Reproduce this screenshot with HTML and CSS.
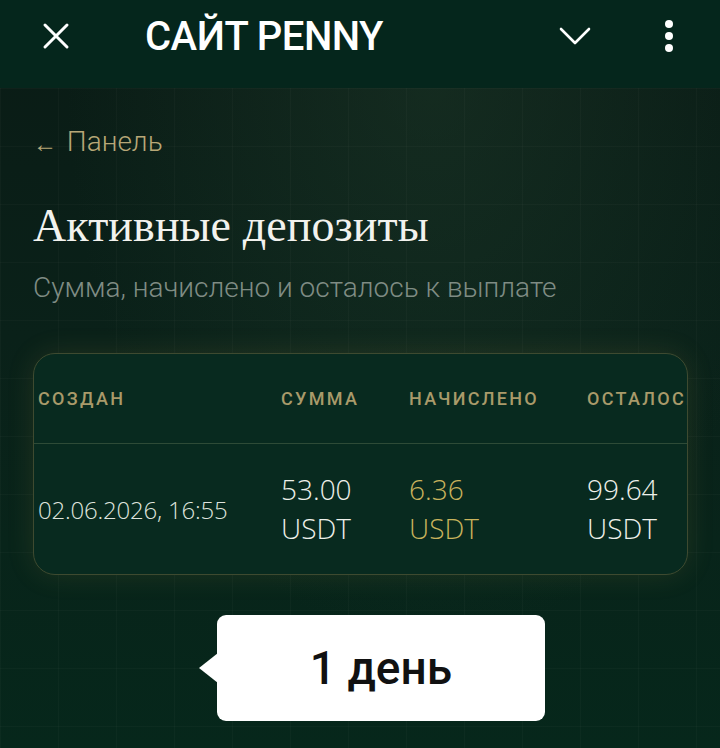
FILE: index.html
```html
<!DOCTYPE html>
<html lang="ru">
<head>
  <meta charset="UTF-8" />
  <title>САЙТ PENNY</title>
  <link rel="stylesheet" href="styles.css">
</head>
<body>
  <header class="topbar">
    <svg class="icon-close" width="28" height="28" viewBox="0 0 28 28">
      <path d="M3 3 L25 25 M25 3 L3 25" stroke="#fff" stroke-width="3" stroke-linecap="round" fill="none"/>
    </svg>
    <div class="topbar-title">САЙТ PENNY</div>
    <svg class="icon-chevron" width="32" height="18" viewBox="0 0 32 18">
      <path d="M2 2 L16 16 L30 2" stroke="#fff" stroke-width="2.6" stroke-linecap="round" stroke-linejoin="round" fill="none"/>
    </svg>
    <svg class="icon-more" width="12" height="32" viewBox="0 0 12 32">
      <circle cx="6" cy="4" r="4" fill="#fff"/>
      <circle cx="6" cy="16" r="4" fill="#fff"/>
      <circle cx="6" cy="28" r="4" fill="#fff"/>
    </svg>
  </header>

  <main class="page">
    <a class="back-link" href="#"><span class="back-arrow">←</span> Панель</a>
    <h1>Активные депозиты</h1>
    <p class="subtitle">Сумма, начислено и осталось к выплате</p>

    <div class="card">
      <table class="deposits">
        <thead>
          <tr>
            <th class="col-date">Создан</th>
            <th class="col-sum">Сумма</th>
            <th class="col-acc">Начислено</th>
            <th class="col-left">Осталось</th>
          </tr>
        </thead>
        <tbody>
          <tr>
            <td class="date">02.06.2026, 16:55</td>
            <td>53.00<br>USDT</td>
            <td class="accrued">6.36<br>USDT</td>
            <td>99.64<br>USDT</td>
          </tr>
        </tbody>
      </table>
    </div>

    <div class="tooltip">1 день</div>
  </main>
</body>
</html>
```

FILE: styles.css
```css
body {
  margin: 0;
  height: 748px;
  overflow: hidden;
  font-family: Roboto, "Noto Sans", sans-serif;
  background-color: #08231a;
  background-image:
    linear-gradient(rgba(255, 255, 255, 0.022) 1px, transparent 1px),
    linear-gradient(90deg, rgba(255, 255, 255, 0.022) 1px, transparent 1px),
    radial-gradient(ellipse at 60% 10%, rgba(40, 70, 50, 0.35), transparent 60%),
    linear-gradient(180deg, #0a1b15 0%, #0a2119 45%, #06271b 100%);
  background-size: 58px 58px, 58px 58px, 100% 100%, 100% 100%;
  background-position: 0 30px, 0 0, 0 0, 0 0;
  color: #fff;
}

.topbar {
  height: 88px;
  background: #05261c;
  display: flex;
  align-items: center;
  padding: 0 42px;
  box-sizing: border-box;
}

.icon-close {
  margin-top: -16px;
}

.topbar-title {
  font-size: 40px;
  font-weight: 500;
  margin-left: 75px;
  margin-top: -16px;
  flex: 1;
  letter-spacing: -0.5px;
}

.icon-chevron {
  margin-top: -16px;
  margin-right: 72px;
}

.icon-more {
  margin-top: -16px;
  margin-right: 3px;
}

.page {
  position: relative;
  padding: 39px 32px 0 33px;
}

.back-link {
  display: block;
  font-size: 28px;
  line-height: 30px;
  font-weight: 300;
  color: #b7a777;
  text-decoration: none;
}

.back-arrow {
  font-size: 24px;
  margin-right: 3px;
  position: relative;
  top: 1px;
}

h1 {
  margin: 42px 0 0;
  font-family: "Liberation Serif", "DejaVu Serif", serif;
  font-weight: 400;
  font-size: 46px;
  line-height: 52px;
  color: #f2f2ee;
  letter-spacing: 0.1px;
}

.subtitle {
  margin: 20px 0 0;
  font-size: 28px;
  line-height: 32px;
  font-weight: 300;
  color: #7f8c84;
}

.card {
  margin-top: 49px;
  width: 655px;
  height: 222px;
  box-sizing: border-box;
  border: 1px solid #3e4a30;
  border-radius: 22px;
  background: #082a1f;
  overflow: hidden;
  box-shadow: 0 0 28px rgba(190, 160, 80, 0.13);
}

.deposits {
  border-collapse: collapse;
  table-layout: fixed;
  width: 720px;
}

.deposits th,
.deposits td {
  text-align: left;
  padding: 0 0 0 4px;
  vertical-align: middle;
}

.deposits th {
  height: 89px;
  font-size: 18px;
  font-weight: 500;
  letter-spacing: 2.3px;
  text-transform: uppercase;
  color: #a99a6a;
  border-bottom: 1px solid #2e4b37;
  white-space: nowrap;
}

.col-date { width: 239px; }
.col-sum { width: 124px; }
.col-acc { width: 174px; }
.col-left { width: 170px; }

.deposits td {
  height: 130px;
  font-family: "Open Sans", sans-serif;
  font-weight: 300;
  font-size: 28px;
  line-height: 39px;
  color: #eef0ea;
}

.deposits td.date {
  font-size: 24px;
  letter-spacing: -0.2px;
  color: #dfe3dd;
}

.deposits td.accrued {
  color: #c9b35c;
}

.tooltip {
  position: absolute;
  left: 217px;
  top: 527px;
  width: 328px;
  height: 106px;
  background: #fff;
  border-radius: 9px;
  color: #111;
  font-size: 46px;
  font-weight: 500;
  display: flex;
  align-items: center;
  justify-content: center;
}

.tooltip::before {
  content: "";
  position: absolute;
  left: -18px;
  top: 38px;
  border-top: 15px solid transparent;
  border-bottom: 15px solid transparent;
  border-right: 19px solid #fff;
}
```
